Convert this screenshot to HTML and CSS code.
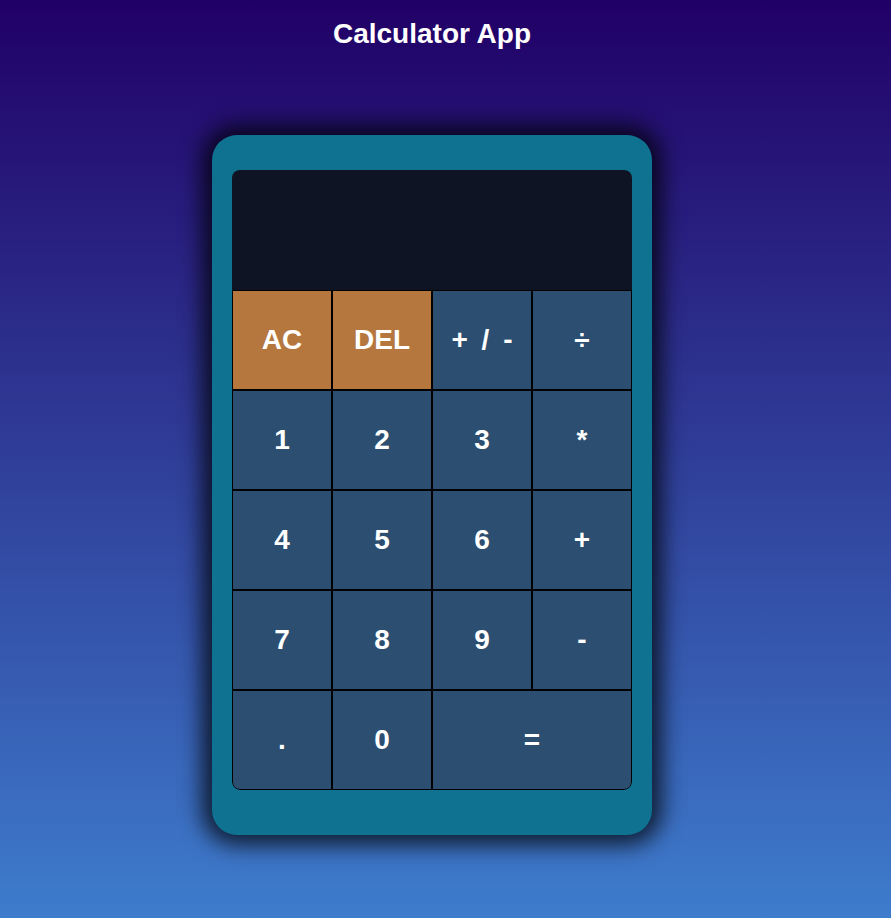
FILE: index.html
```html
<!DOCTYPE html>
<html lang="en">
<head>
<meta charset="utf-8">
<title>Calculator App</title>
<link rel="stylesheet" href="styles.css">
</head>
<body>
<h1 class="title">Calculator App</h1>
<div class="calculator">
  <div class="grid">
    <div class="display"></div>
    <button class="key key-accent">AC</button>
    <button class="key key-accent">DEL</button>
    <button class="key key-sign">+ / -</button>
    <button class="key">÷</button>
    <button class="key">1</button>
    <button class="key">2</button>
    <button class="key">3</button>
    <button class="key">*</button>
    <button class="key">4</button>
    <button class="key">5</button>
    <button class="key">6</button>
    <button class="key">+</button>
    <button class="key">7</button>
    <button class="key">8</button>
    <button class="key">9</button>
    <button class="key">-</button>
    <button class="key key-bl">.</button>
    <button class="key">0</button>
    <button class="key key-wide key-br">=</button>
  </div>
</div>
</body>
</html>
```
FILE: styles.css
```css
* { box-sizing: border-box; }
html, body { height: 100%; }
body {
  margin: 0;
  padding-right: 27px;
  min-height: 918px;
  background: linear-gradient(to bottom, #210066 0%, #3e7ccc 100%);
  font-family: "Liberation Sans", Arial, sans-serif;
  display: flex;
  flex-direction: column;
  align-items: center;
}
.title {
  margin: 16px 0 0;
  height: 35px;
  font-size: 28px;
  line-height: 35px;
  font-weight: bold;
  color: #ffffff;
}
.calculator {
  margin-top: 84px;
  width: 440px;
  padding: 35px 20px 45px;
  background: #0e7290;
  border-radius: 25px;
  box-shadow: 0 0 22px 10px rgba(0, 0, 0, 0.75);
}
.grid {
  display: grid;
  grid-template-columns: repeat(4, 100px);
  grid-template-rows: 120px repeat(5, 100px);
  border-radius: 8px;
  overflow: hidden;
}
.display {
  grid-column: 1 / -1;
  background: #0f1424;
}
.key {
  margin: 0;
  padding: 0;
  border: 1px solid #000;
  background: #2b4e71;
  color: #ffffff;
  font-family: "Liberation Sans", Arial, sans-serif;
  font-weight: bold;
  font-size: 28px;
}
.key-sign { word-spacing: 6px; }
.key-accent { background: #b5773e; }
.key-wide { grid-column: span 2; }
.key-bl { border-bottom-left-radius: 8px; }
.key-br { border-bottom-right-radius: 8px; }
```
